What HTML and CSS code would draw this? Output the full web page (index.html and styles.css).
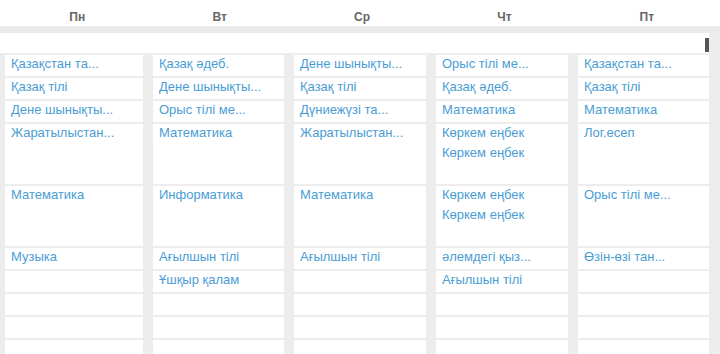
FILE: index.html
```html
<!DOCTYPE html>
<html lang="kk">
<head>
<meta charset="utf-8">
<title>Кесте</title>
<link rel="stylesheet" href="styles.css">
</head>
<body>
<div class="head">
  <div class="day">Пн</div>
  <div class="day">Вт</div>
  <div class="day">Ср</div>
  <div class="day">Чт</div>
  <div class="day">Пт</div>
</div>
<div class="bar"></div>
<div class="body">
  <div class="main">
    <div class="spacer"><span class="thumb"></span></div>
    <div class="grid">
      <div class="col">
        <div class="cell"><div class="line">Қазақстан та...</div></div>
        <div class="cell"><div class="line">Қазақ тілі</div></div>
        <div class="cell"><div class="line">Дене шынықты...</div></div>
        <div class="cell tall"><div class="line">Жаратылыстан...</div></div>
        <div class="cell tall"><div class="line">Математика</div></div>
        <div class="cell"><div class="line">Музыка</div></div>
        <div class="cell"></div>
        <div class="cell"></div>
        <div class="cell"></div>
        <div class="cell"></div>
      </div>
      <div class="col">
        <div class="cell"><div class="line">Қазақ әдеб.</div></div>
        <div class="cell"><div class="line">Дене шынықты...</div></div>
        <div class="cell"><div class="line">Орыс тілі ме...</div></div>
        <div class="cell tall"><div class="line">Математика</div></div>
        <div class="cell tall"><div class="line">Информатика</div></div>
        <div class="cell"><div class="line">Ағылшын тілі</div></div>
        <div class="cell"><div class="line">Ұшқыр қалам</div></div>
        <div class="cell"></div>
        <div class="cell"></div>
        <div class="cell"></div>
      </div>
      <div class="col">
        <div class="cell"><div class="line">Дене шынықты...</div></div>
        <div class="cell"><div class="line">Қазақ тілі</div></div>
        <div class="cell"><div class="line">Дүниежүзі та...</div></div>
        <div class="cell tall"><div class="line">Жаратылыстан...</div></div>
        <div class="cell tall"><div class="line">Математика</div></div>
        <div class="cell"><div class="line">Ағылшын тілі</div></div>
        <div class="cell"></div>
        <div class="cell"></div>
        <div class="cell"></div>
        <div class="cell"></div>
      </div>
      <div class="col">
        <div class="cell"><div class="line">Орыс тілі ме...</div></div>
        <div class="cell"><div class="line">Қазақ әдеб.</div></div>
        <div class="cell"><div class="line">Математика</div></div>
        <div class="cell tall"><div class="line">Көркем еңбек</div><div class="line">Көркем еңбек</div></div>
        <div class="cell tall"><div class="line">Көркем еңбек</div><div class="line">Көркем еңбек</div></div>
        <div class="cell"><div class="line">әлемдегі қыз...</div></div>
        <div class="cell"><div class="line">Ағылшын тілі</div></div>
        <div class="cell"></div>
        <div class="cell"></div>
        <div class="cell"></div>
      </div>
      <div class="col">
        <div class="cell"><div class="line">Қазақстан та...</div></div>
        <div class="cell"><div class="line">Қазақ тілі</div></div>
        <div class="cell"><div class="line">Математика</div></div>
        <div class="cell tall"><div class="line">Лог.есеп</div></div>
        <div class="cell tall"><div class="line">Орыс тілі ме...</div></div>
        <div class="cell"><div class="line">Өзін-өзі тан...</div></div>
        <div class="cell"></div>
        <div class="cell"></div>
        <div class="cell"></div>
        <div class="cell"></div>
      </div>
    </div>
  </div>
</div>
</body>
</html>
```
FILE: styles.css
```css
html, body {
  margin: 0;
  padding: 0;
  background: #fff;
  font-family: "Liberation Sans", Arial, sans-serif;
  overflow: hidden;
}

.head {
  display: grid;
  grid-template-columns: repeat(5, 1fr);
  height: 26px;
  padding: 0 2px 0 6px;
}

.day {
  text-align: center;
  font-size: 12px;
  font-weight: bold;
  color: #666;
  line-height: 16px;
  padding-top: 9px;
}

.bar {
  height: 7px;
  background: #ebebeb;
}

.body {
  background: #ededed;
  display: flex;
  height: 330px;
}

.main {
  width: 709px;
}

.spacer {
  position: relative;
  height: 20px;
  background: #fff;
}

.thumb {
  position: absolute;
  right: 0;
  top: 5px;
  width: 4px;
  height: 14px;
  background: #555;
}

.grid {
  display: grid;
  grid-template-columns: 138px 131px 132px 132px 131px;
  column-gap: 10px;
  padding-left: 5px;
}

.col {
  display: flex;
  flex-direction: column;
  gap: 2px;
  padding-top: 2px;
}

.cell {
  background: #fff;
  height: 21px;
  padding-left: 6px;
  box-sizing: border-box;
  font-size: 13px;
  color: #4a9dd4;
  overflow: hidden;
  white-space: nowrap;
}

.cell.tall {
  height: 60px;
}

.line {
  line-height: 18px;
  margin-bottom: 2px;
}
```
